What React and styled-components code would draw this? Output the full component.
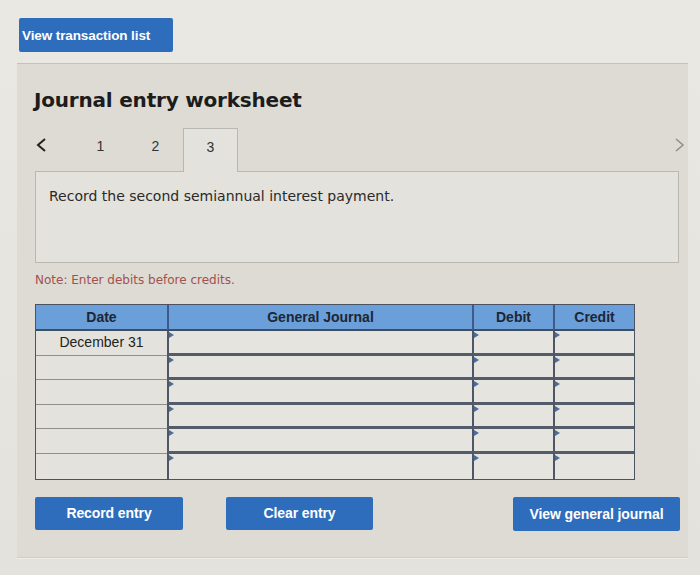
import React from "react";
import styled, { createGlobalStyle } from "styled-components";

const Global = createGlobalStyle`
  html, body { margin: 0; padding: 0; background: #e8e6e1; }
  body { width: 700px; height: 575px; overflow: hidden; font-family: "Liberation Sans", Arial, sans-serif; }
`;

const Page = styled.div`
  padding: 18px 12px 0 17px;
  height: 575px;
  box-sizing: border-box;
  background: linear-gradient(180deg, #eae8e3 0%, #e4e2dc 100%);
`;

const TopBar = styled.div`
  padding-left: 2px;
  height: 45px;
`;

const BlueButton = styled.button`
  height: ${(p) => p.$h || 33}px;
  width: ${(p) => p.$w}px;
  background: #2e6cbc;
  color: #fff;
  border: none;
  border-radius: 2px;
  font-family: "Liberation Sans", Arial, sans-serif;
  font-weight: bold;
  font-size: ${(p) => p.$fs || 14}px;
  letter-spacing: -0.1px;
  text-align: ${(p) => (p.$left ? "left" : "center")};
  padding: ${(p) => (p.$left ? "0 0 0 3px" : "0")};
  cursor: pointer;
`;

const Panel = styled.section`
  width: 671px;
  height: 495px;
  box-sizing: border-box;
  background: #dddbd4;
  border-top: 1px solid #c4c2bb;
  border-bottom: 1px solid #cfcdc6;
  box-shadow: 0 1px 0 #f0eee9;
  padding: 24px 0 0 18px;
`;

const Title = styled.h1`
  margin: 0 0 0 -1px;
  font-family: "DejaVu Sans", Verdana, sans-serif;
  font-weight: bold;
  font-size: 20px;
  line-height: 24px;
  color: #1c1c1c;
  letter-spacing: -0.2px;
`;

const TabRow = styled.div`
  display: flex;
  align-items: stretch;
  height: 43px;
  margin-top: 16px;
  width: 651px;
`;

const Chevron = styled.div`
  width: ${(p) => p.$w}px;
  display: flex;
  align-items: center;
  justify-content: ${(p) => (p.$right ? "flex-end" : "flex-start")};
  padding-bottom: 10px;
  box-sizing: border-box;
  margin-left: ${(p) => (p.$right ? "auto" : "0")};
  color: ${(p) => (p.$right ? "#8d8d8b" : "#222")};
`;

const Tab = styled.div`
  width: 55px;
  box-sizing: border-box;
  display: flex;
  align-items: flex-start;
  justify-content: center;
  padding-top: 10px;
  font-family: "Liberation Sans", Arial, sans-serif;
  font-size: 14px;
  color: #333;
  position: relative;
  ${(p) =>
    p.$active &&
    `
    background: #e4e2dc;
    border: 1px solid #b9b7b1;
    border-bottom: none;
    margin-bottom: -1px;
    z-index: 1;
  `}
`;

const Prompt = styled.div`
  width: 644px;
  height: 92px;
  box-sizing: border-box;
  background: #e4e2dc;
  border: 1px solid #b9b7b1;
  padding: 16px 0 0 13px;
  font-family: "DejaVu Sans", Verdana, sans-serif;
  font-size: 14px;
  color: #2a2a2a;
`;

const Note = styled.p`
  margin: 10px 0 0 0;
  font-family: "DejaVu Sans", Verdana, sans-serif;
  font-size: 12px;
  line-height: 15px;
  color: #a4504c;
`;

const Grid = styled.div`
  margin-top: 16px;
  width: 600px;
  box-sizing: border-box;
  display: grid;
  grid-template-columns: 131px 305px 81px 81px;
  grid-template-rows: 26px repeat(6, 24.6px);
  border: 1px solid #4b5363;
  background: #e4e2dc;
`;

const Head = styled.div`
  background: #6a9fd9;
  border-bottom: 2px solid #3f4d63;
  border-left: ${(p) => (p.$first ? "none" : "2px solid #3f5a86")};
  display: flex;
  align-items: center;
  justify-content: center;
  font-weight: bold;
  font-size: 14px;
  color: #1e2633;
`;

const DateCell = styled.div`
  border-bottom: ${(p) => (p.$last ? "none" : "1px solid #8f8f8c")};
  display: flex;
  align-items: center;
  justify-content: center;
  font-size: 14px;
  color: #222;
  padding-bottom: 2px;
`;

const InputCell = styled.div`
  border-left: 2px solid #4f5766;
  border-bottom: ${(p) => (p.$last ? "none" : "3px solid #555c69")};
  position: relative;
  background: #e6e4de;
  &::before {
    content: "";
    position: absolute;
    left: 0;
    top: 1px;
    border-top: 3px solid transparent;
    border-bottom: 3px solid transparent;
    border-left: 5px solid #4a6b9c;
  }
`;

const Actions = styled.div`
  display: flex;
  align-items: flex-start;
  margin-top: 17px;
  width: 645px;
`;

const Spacer = styled.div`
  width: ${(p) => p.$w}px;
`;

function LeftChevron() {
  return (
    <svg width="12" height="16" viewBox="0 0 12 16">
      <path d="M10 2 L3 8 L10 14" fill="none" stroke="currentColor" strokeWidth="2" />
    </svg>
  );
}
function RightChevron() {
  return (
    <svg width="12" height="16" viewBox="0 0 12 16">
      <path d="M2 2 L9 8 L2 14" fill="none" stroke="currentColor" strokeWidth="1.5" />
    </svg>
  );
}

export default function App() {
  const rows = [0, 1, 2, 3, 4, 5];
  return (
    <Page>
      <Global />
      <TopBar>
        <BlueButton $w={154} $h={34} $fs={13.5} $left>View transaction list</BlueButton>
      </TopBar>
      <Panel>
        <Title>Journal entry worksheet</Title>
        <TabRow>
          <Chevron $w={38}><LeftChevron /></Chevron>
          <Tab>1</Tab>
          <Tab>2</Tab>
          <Tab $active>3</Tab>
          <Chevron $w={20} $right><RightChevron /></Chevron>
        </TabRow>
        <Prompt>Record the second semiannual interest payment.</Prompt>
        <Note>Note: Enter debits before credits.</Note>
        <Grid>
          <Head $first>Date</Head>
          <Head>General Journal</Head>
          <Head>Debit</Head>
          <Head>Credit</Head>
          {rows.map((r) => (
            <React.Fragment key={r}>
              <DateCell $last={r === 5}>{r === 0 ? "December 31" : ""}</DateCell>
              <InputCell $last={r === 5} />
              <InputCell $last={r === 5} />
              <InputCell $last={r === 5} />
            </React.Fragment>
          ))}
        </Grid>
        <Actions>
          <BlueButton $w={148}>Record entry</BlueButton>
          <Spacer $w={43} />
          <BlueButton $w={147}>Clear entry</BlueButton>
          <Spacer $w={140} />
          <BlueButton $w={167} $h={34}>View general journal</BlueButton>
        </Actions>
      </Panel>
    </Page>
  );
}
